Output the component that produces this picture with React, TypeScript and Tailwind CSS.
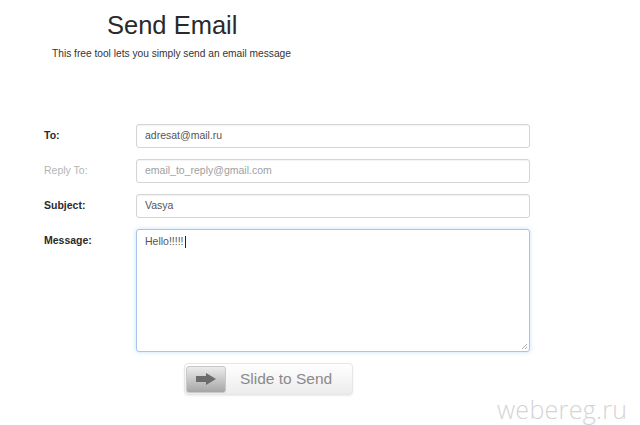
import React from "react";

const font = { fontFamily: '"Liberation Sans", Arial, sans-serif' };

function Row({ label, muted, children }: { label: string; muted?: boolean; children: React.ReactNode }) {
  return (
    <div className="flex items-start">
      <div
        className={`w-[92px] h-[24px] flex items-center text-[10.5px] ${muted ? "text-[#b5b5b5]" : "font-bold text-[#2a2a2a]"}`}
      >
        {label}
      </div>
      {children}
    </div>
  );
}

function Field({ value, placeholder }: { value?: string; placeholder?: boolean }) {
  return (
    <div
      className={`w-[394px] h-[24px] flex items-center pl-[8px] border border-[#d4d4d4] rounded-[3px] bg-white text-[10.5px] shadow-[inset_0_1px_1px_rgba(0,0,0,0.05)] ${placeholder ? "text-[#a0a0a0]" : "text-[#555]"}`}
    >
      {value}
    </div>
  );
}

export default function App() {
  return (
    <div className="relative w-[640px] h-[425px] bg-white overflow-hidden" style={font}>
      <div className="pt-[10px]">
        <div className="ml-[107px] text-[25.5px] leading-[30px] text-[#2a2a2a]">Send Email</div>
        <div className="ml-[52px] mt-[7px] text-[10.2px] leading-[13px] text-[#333]">
          This free tool lets you simply send an email message
        </div>
      </div>

      <div className="mt-[64px] ml-[44px] flex flex-col gap-[11px]">
        <Row label="To:">
          <Field value="adresat@mail.ru" />
        </Row>
        <Row label="Reply To:" muted>
          <Field value="email_to_reply@gmail.com" placeholder />
        </Row>
        <Row label="Subject:">
          <Field value="Vasya" />
        </Row>
        <Row label="Message:">
          <div className="relative w-[394px] h-[123px] border border-[#a9c4e8] rounded-[3px] bg-white shadow-[0_0_4px_rgba(82,168,236,0.35)] pl-[8px] pt-[5px] text-[10.5px] text-[#555] leading-[13px]">
            <span>Hello!!!!!</span>
            <span className="inline-block w-[1px] h-[12px] bg-[#222] align-middle ml-[1px]" />
            <svg className="absolute right-[1px] bottom-[1px]" width="8" height="8" viewBox="0 0 8 8">
              <line x1="7" y1="2" x2="2" y2="7" stroke="#999" strokeWidth="0.8" />
              <line x1="7" y1="5" x2="5" y2="7" stroke="#999" strokeWidth="0.8" />
            </svg>
          </div>
        </Row>
      </div>

      <div className="ml-[184px] mt-[11px] w-[169px] h-[32px] rounded-[4px] border border-[#e6e6e6] bg-gradient-to-b from-[#ffffff] to-[#ececec] shadow-[0_1px_2px_rgba(0,0,0,0.08)] flex items-center pl-[1px]">
        <div className="w-[40px] h-[27px] rounded-[3px] bg-gradient-to-b from-[#ececec] to-[#a6a6a6] border border-[#c8c8c8] flex items-center justify-center">
          <svg width="20" height="12" viewBox="0 0 20 12">
            <rect x="0" y="3" width="11" height="6" fill="#6b6b6b" />
            <polygon points="10,0 20,6 10,12" fill="#6b6b6b" />
          </svg>
        </div>
        <div className="ml-[14px] text-[15.5px] text-[#8a8a8a]">Slide to Send</div>
      </div>

      <div
        className="absolute left-[497px] top-[391px] text-[25px] font-light text-[#d4d4d4] tracking-[0.3px]"
        style={{ fontFamily: '"Open Sans", sans-serif' }}
      >
        webereg.ru
      </div>
    </div>
  );
}
